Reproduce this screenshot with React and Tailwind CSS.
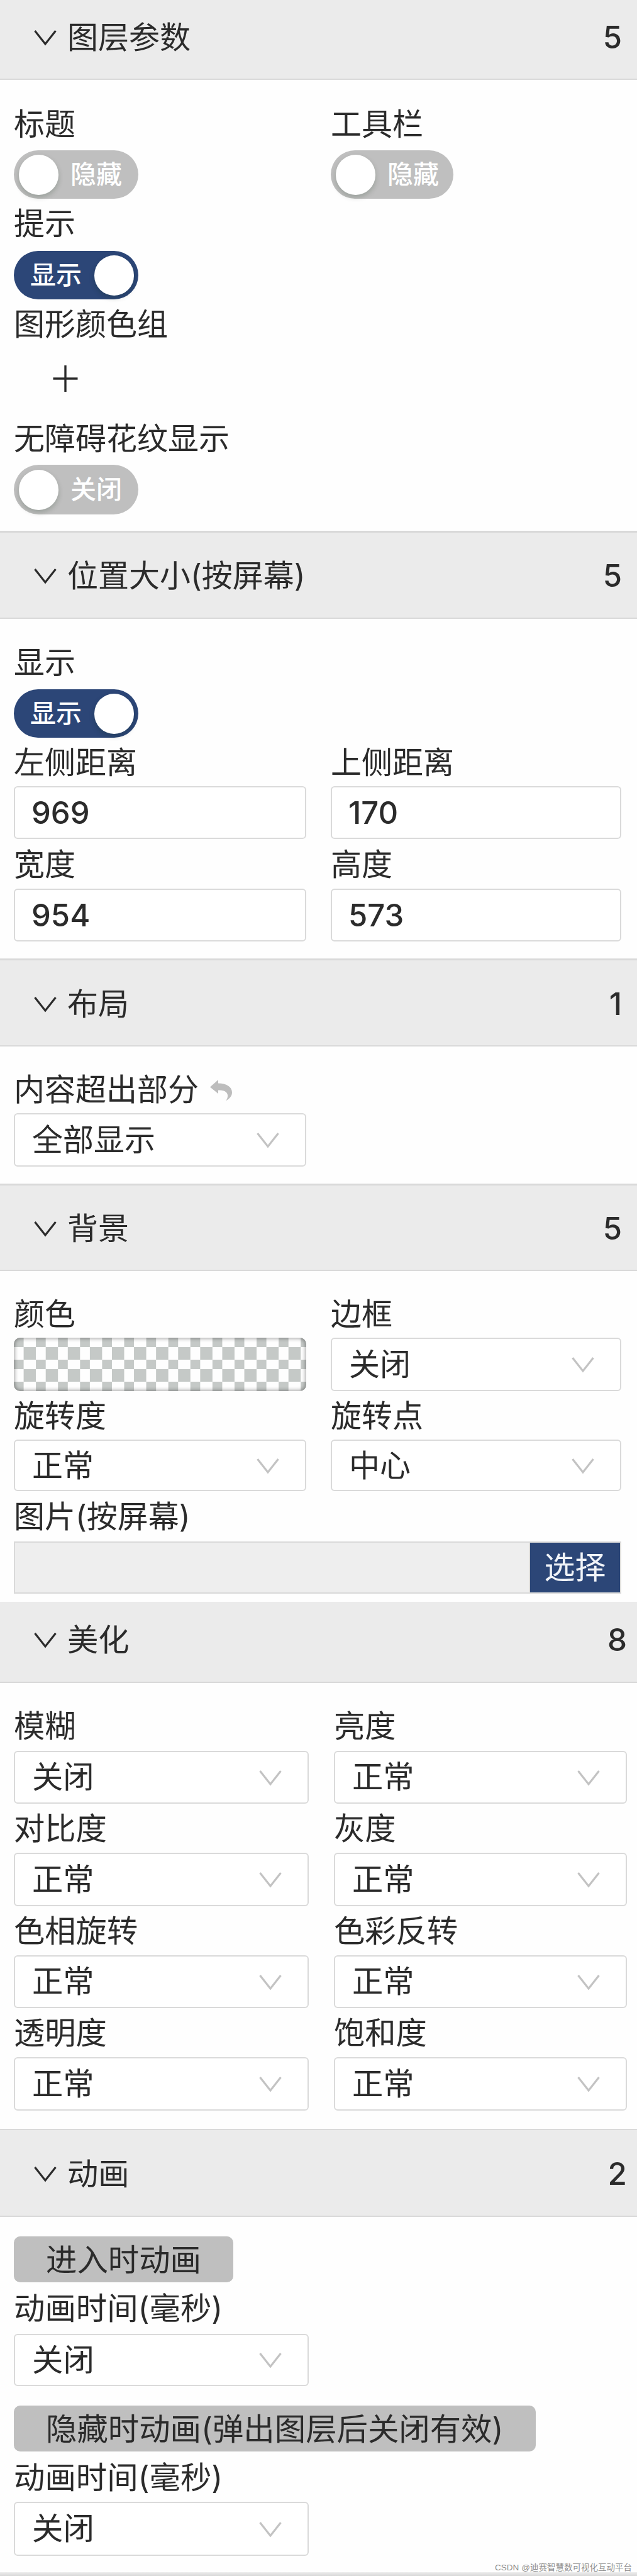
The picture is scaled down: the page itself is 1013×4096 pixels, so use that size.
import React from 'react';
import clsx from 'clsx';

function Chevron({ className }) {
  return (
    <svg viewBox="0 0 36 25" className={clsx("w-[36px] h-[25px] shrink-0", className)} fill="none" stroke="currentColor" strokeWidth="3.2">
      <path d="M1.5 1 L18 22 L34.5 1" />
    </svg>
  );
}

function Header({ title, count, className }) {
  return (
    <div className={clsx("flex items-center bg-[#ebebeb] border-[#d9d9d9] pl-[54px]", className)}>
      <Chevron className="mr-[17px] mt-[2px]" />
      <span className="flex-1">{title}</span>
      <span className="font-medium">{count}</span>
    </div>
  );
}

function Label({ children, className = "h-[78px]" }) {
  return <div className={clsx("flex items-center whitespace-nowrap", className)}>{children}</div>;
}

function Toggle({ on, text, className = "w-[198px] h-[77px]" }) {
  return (
    <div
      className={clsx(
        "flex items-center rounded-full text-[41px] leading-none font-medium text-white",
        on ? "flex-row-reverse bg-[#2c4677] pr-[7px]" : "bg-[#bfbfbf] pl-[8px]",
        className
      )}
    >
      <div className="w-[63px] h-[64px] shrink-0 rounded-full bg-white shadow-[0_4px_8px_rgba(0,35,11,0.2)]" />
      <span className={on ? "mr-[20px]" : "ml-[19px]"}>{text}</span>
    </div>
  );
}

function Input({ value, className = "h-[84px]" }) {
  return (
    <div className={clsx("flex items-center rounded-[6px] border-2 border-[#dadada] bg-white pl-[26px] font-medium", className)}>
      {value}
    </div>
  );
}

function Select({ value, className = "h-[84px]" }) {
  return (
    <div className={clsx("flex items-center justify-between rounded-[6px] border-2 border-[#dadada] bg-white pl-[27px] pr-[41px]", className)}>
      <span>{value}</span>
      <Chevron className="text-[#c3c3c3] mt-[2px]" />
    </div>
  );
}

function Tag({ children }) {
  return (
    <div className="flex w-fit items-center h-[73px] rounded-[10px] bg-[#bfbfbf] px-[51px] whitespace-nowrap pt-[2px]">
      {children}
    </div>
  );
}

function App() {
  return (
    <div className="relative w-[1013px] h-[4096px] overflow-hidden bg-[#fefefe] text-[#2b2b2b] text-[49px] leading-none font-['Inter','Noto_Sans_CJK_SC',sans-serif]">

      {/* Layer parameters */}
      <Header title="图层参数" count="5" className="h-[127px] border-b-2 pb-[7px] pr-[24px]" />
      <div className="px-[22px] pt-[29px] pb-[26px]">
        <div className="grid grid-cols-[465px_462px] gap-x-[39px]">
          <div>
            <Label className="h-[83px]">标题</Label>
            <Toggle text="隐藏" />
          </div>
          <div>
            <Label className="h-[83px]">工具栏</Label>
            <Toggle text="隐藏" className="w-[195px] h-[77px]" />
          </div>
        </div>
        <Label className="h-[83px] pb-[5px]">提示</Label>
        <Toggle on text="显示" />
        <Label>图形颜色组</Label>
        <div className="flex items-center h-[101px] pl-[62px] pb-[6px]">
          <svg viewBox="0 0 40 44" className="w-[40px] h-[44px]" stroke="currentColor" strokeWidth="3.4" fill="none">
            <path d="M20 1 V43 M0.5 22 H39.5" />
          </svg>
        </div>
        <Label className="h-[84px]">无障碍花纹显示</Label>
        <Toggle text="关闭" className="w-[198px] h-[79px]" />
      </div>

      {/* Position and size */}
      <Header title="位置大小(按屏幕)" count="5" className="h-[140px] border-t-3 border-b-2 pt-[2px] pr-[24px]" />
      <div className="px-[22px] pt-[26px] pb-[27px]">
        <Label className="h-[86px]">显示</Label>
        <Toggle on text="显示" />
        <div className="grid grid-cols-[465px_462px] gap-x-[39px]">
          <div>
            <Label className="h-[77px] pt-[2px]">左侧距离</Label>
            <Input value="969" />
            <Label className="h-[79px] pt-[2px]">宽度</Label>
            <Input value="954" />
          </div>
          <div>
            <Label className="h-[77px] pt-[2px]">上侧距离</Label>
            <Input value="170" />
            <Label className="h-[79px] pt-[2px]">高度</Label>
            <Input value="573" />
          </div>
        </div>
      </div>

      {/* Layout */}
      <Header title="布局" count="1" className="h-[140px] border-t-3 border-b-2 pt-[3px] pr-[24px]" />
      <div className="px-[22px] pt-[30px] pb-[27px]">
        <Label className="h-[76px]">
          内容超出部分
          <svg viewBox="0 0 35 33" className="ml-[18px] mt-[3px] w-[35px] h-[33px] text-[#bdbdbd]" fill="currentColor">
            <path d="M0 11.5 L13 0 V5.5 C26 5.5 35 11 35 20 C35 26 31 30 25 33.5 C31 26 29 15.5 13 16.5 V22 Z" />
          </svg>
        </Label>
        <Select value="全部显示" className="w-[465px] h-[85px]" />
      </div>

      {/* Background */}
      <Header title="背景" count="5" className="h-[139px] border-t-3 border-b-2 pt-[3px] pr-[24px]" />
      <div className="px-[22px] pt-[30px] pb-[13px]">
        <div className="grid grid-cols-[465px_462px] gap-x-[39px]">
          <div>
            <Label className="h-[76px]">颜色</Label>
            <div className="h-[85px] rounded-[10px] bg-[conic-gradient(at_16px_15px,#fefefe_25%,#c5c9c7_0_50%,#fefefe_0_75%,#c5c9c7_0)] bg-[length:35.1px_35px] shadow-[inset_0_0_6px_1px_rgba(0,0,0,0.4)]" />
            <Label className="h-[77px] pt-[1px]">旋转度</Label>
            <Select value="正常" className="h-[82px]" />
          </div>
          <div>
            <Label className="h-[76px]">边框</Label>
            <Select value="关闭" className="h-[85px]" />
            <Label className="h-[77px] pt-[1px]">旋转点</Label>
            <Select value="中心" className="h-[82px]" />
          </div>
        </div>
        <Label className="h-[80px] pt-[1px]">图片(按屏幕)</Label>
        <div className="flex w-[966px] h-[83px] border-2 border-[#d9d9d9] bg-[#eeeeee]">
          <div className="flex-1 border-r-2 border-[#d9d9d9]" />
          <div className="flex w-[143px] items-center justify-center bg-[#2c4677] text-[#f0f3f8]">选择</div>
        </div>
      </div>

      {/* Effects */}
      <Header title="美化" count="8" className="h-[129px] border-b-2 pb-[6px] pr-[16px] text-[49.3px]" />
      <div className="px-[22px] pt-[29px] pb-[29px] text-[49.3px]">
        <div className="grid grid-cols-[469px_466px] gap-x-[40px]">
          <div>
            <Label className="h-[79px]">模糊</Label>
            <Select value="关闭" />
            <Label className="h-[78px] pt-[1px]">对比度</Label>
            <Select value="正常" className="h-[85px]" />
            <Label className="h-[78px] pt-[2px]">色相旋转</Label>
            <Select value="正常" />
            <Label className="h-[78px] pt-[1px]">透明度</Label>
            <Select value="正常" className="h-[85px]" />
          </div>
          <div>
            <Label className="h-[79px]">亮度</Label>
            <Select value="正常" />
            <Label className="h-[78px] pt-[1px]">灰度</Label>
            <Select value="正常" className="h-[85px]" />
            <Label className="h-[78px] pt-[2px]">色彩反转</Label>
            <Select value="正常" />
            <Label className="h-[78px] pt-[1px]">饱和度</Label>
            <Select value="正常" className="h-[85px]" />
          </div>
        </div>
      </div>

      {/* Animation */}
      <Header title="动画" count="2" className="h-[140px] border-t-2 border-b-2 pt-[3px] pr-[16px] text-[49.3px]" />
      <div className="px-[22px] pt-[31px] pb-[26px] text-[49.4px]">
        <Tag>进入时动画</Tag>
        <Label className="h-[82px] pt-[2px]">动画时间(毫秒)</Label>
        <Select value="关闭" className="w-[469px] h-[83px] mb-[31px]" />
        <Tag>隐藏时动画(弹出图层后关闭有效)</Tag>
        <Label className="h-[80px] pt-[4px]">动画时间(毫秒)</Label>
        <Select value="关闭" className="w-[469px] h-[86px]" />
      </div>
      <div className="h-[6px] bg-gradient-to-b from-[#ececec] to-[#d8d8d8]" />

      {/* Watermark */}
      <div className="absolute right-[8px] bottom-[5px] whitespace-nowrap text-[13.5px] leading-[16px] text-[#8f8f8f] font-['Liberation_Sans','Noto_Sans_CJK_SC',sans-serif]">
        <span className="mr-[4px]">CSDN</span>@迪赛智慧数可视化互动平台
      </div>

    </div>
  );
}

export default App;
